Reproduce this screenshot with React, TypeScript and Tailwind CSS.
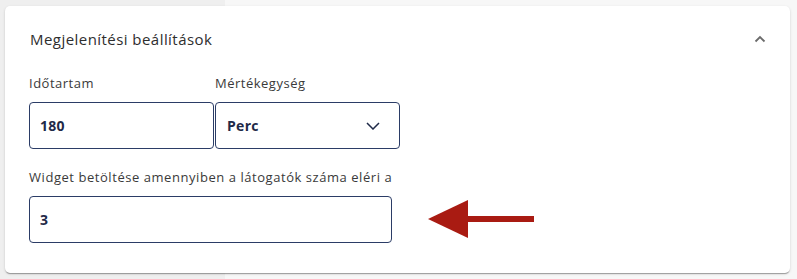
import React from "react";

const font = { fontFamily: '"Open Sans", "Noto Sans", sans-serif' };

function ChevronUp() {
  return (
    <svg width="12" height="8" viewBox="0 0 12 8" fill="none">
      <path d="M1.5 6.5L6 2L10.5 6.5" stroke="#6b6b6b" strokeWidth="1.8" />
    </svg>
  );
}

function ChevronDown() {
  return (
    <svg width="14" height="8" viewBox="0 0 14 8" fill="none">
      <path d="M1 1L7 7L13 1" stroke="#1f2a48" strokeWidth="1.5" />
    </svg>
  );
}

function RedArrow() {
  return (
    <svg width="108" height="40" viewBox="0 0 108 40">
      <polygon points="0,20 40,1 40,39" fill="#a91b12" />
      <rect x="39" y="17" width="67" height="6" fill="#a91b12" />
    </svg>
  );
}

export default function App() {
  return (
    <div
      className="h-[279px] w-[797px] overflow-hidden bg-[linear-gradient(to_right,#efefef_225px,#f7f7f7_225px)] pt-[6px] pl-[5px]"
      style={font}
    >
      <div className="relative h-[267px] w-[785px] rounded-[5px] bg-white shadow-[0_2px_1px_-1px_rgba(0,0,0,0.2),0_1px_1px_0_rgba(0,0,0,0.14),0_1px_3px_0_rgba(0,0,0,0.12)]">
        {/* header */}
        <div className="flex items-center justify-between pl-[25px] pr-[24px] pt-[23px]">
          <span className="text-[15px] leading-[20px] tracking-[0.45px] text-[#2e2e2e]">
            Megjelenítési beállítások
          </span>
          <ChevronUp />
        </div>

        {/* duration + unit */}
        <div className="mt-[26px] flex pl-[24px]">
          <div className="flex w-[185px] flex-col">
            <label className="text-[13px] leading-[16px] tracking-[0.5px] text-[#3a3a3a]">Időtartam</label>
            <div className="mt-[11px] flex h-[47px] items-center rounded-[4px] border border-[#2b3c66] pl-[10px]">
              <span className="text-[14px] font-bold tracking-[0.3px] text-[#1f2a48]">180</span>
            </div>
          </div>
          <div className="ml-[1px] flex w-[185px] flex-col">
            <label className="text-[13px] leading-[16px] tracking-[0.5px] text-[#3a3a3a]">Mértékegység</label>
            <div className="mt-[11px] flex h-[47px] items-center justify-between rounded-[4px] border border-[#2b3c66] pl-[11px] pr-[19px]">
              <span className="text-[14px] font-bold tracking-[0.3px] text-[#1f2a48]">Perc</span>
              <ChevronDown />
            </div>
          </div>
        </div>

        {/* visitor threshold */}
        <div className="mt-[20px] flex w-[387px] flex-col pl-[24px]">
          <label className="whitespace-nowrap text-[13px] leading-[16px] tracking-[0.55px] text-[#3a3a3a]">
            Widget betöltése amennyiben a látogatók száma eléri a
          </label>
          <div className="mt-[11px] flex h-[47px] items-center rounded-[4px] border border-[#2b3c66] pl-[10px]">
            <span className="text-[14px] font-bold text-[#1f2a48]">3</span>
          </div>
        </div>

        <div className="absolute left-[423px] top-[193px]">
          <RedArrow />
        </div>
      </div>
    </div>
  );
}
